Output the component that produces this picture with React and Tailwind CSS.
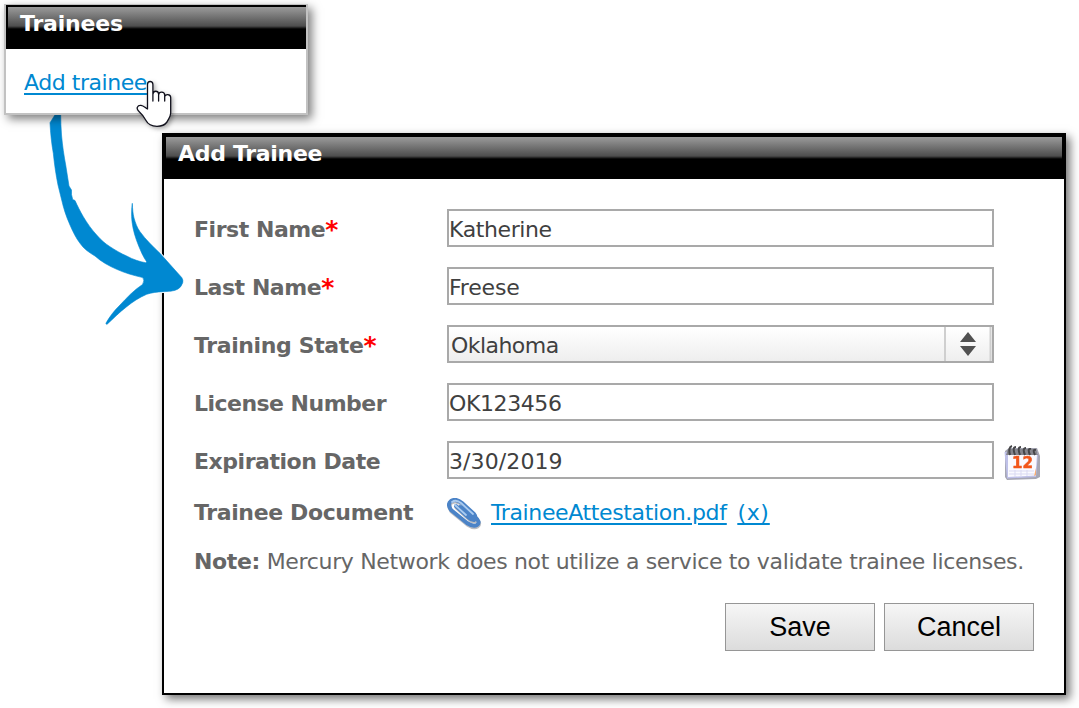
import React, { useState } from 'react';

const STATES = ['Oklahoma', 'Kansas', 'Texas'];

const FIELD =
  'w-[547px] h-[38px] border-2 border-[#a9a9a9] rounded-none bg-white text-[#404040] text-[22px] outline-none';

const ARROW =
  'M50 122.700L55.500 114H60.700C60.700 121 61 128 61.500 135C62.500 146 64 156 65.700 165L69 186L71.500 190V194.500L72.700 199.500L75 200.500C77.500 206 80 211 83.300 216.700C87 223 92 230 96.700 235C101 240 105 243.500 110 246.700C115 250 121 253.500 126.700 256C133 259.500 140 261.800 145.500 262.700Q146.800 262.300 146.500 261.500C143 256.500 141 251.500 138.300 245C135.500 238 133 230 132 221.700C131.300 215 131.500 209 132.300 203.300C132.500 209 133 214 134 218C135.500 223 137 227.500 140 231.700C146 240 153 246.500 160 253.300L181.700 277.500Q183.500 280 182.700 282.800Q181 287.500 178 289C174 291.500 168 291.300 163.300 291.700C157 292 152 292.500 146.700 294.300C139 297.500 132.500 302 126.700 306.700C119 312.500 113 319 106.900 324.400L105.800 323.500C110 316 114 311 120 305C127 297.500 134 290 142.500 284.500Q145 280.500 142.800 277.600C133 275.300 125 273 116.700 269.300C109 266 101 261.500 95 256C89 252.500 84 249 80 243.300C76 238 73 232 70 225C66 216 63.500 208 61.700 200L58 185C56 175 54.500 165 53.300 153.300C51.500 143 50.500 133 50 122.700Z';

function TitleBar({ children, className }) {
  return (
    <div className={`bg-black ${className}`}>
      <div className="h-full bg-[linear-gradient(to_bottom,#9b9b9b_0px,#4e4e4e_19px,#000_22px)] font-bold text-white text-[22px] leading-[34px] whitespace-nowrap">
        {children}
      </div>
    </div>
  );
}

function Row({ label, required, labelClass, children }) {
  return (
    <div className="flex items-center h-[38px] mb-5">
      <label className="flex w-[253px] shrink-0 font-bold whitespace-nowrap pt-[3px]">
        <span className={labelClass}>{label}</span>
        {required && <span className="text-[#ff0000] text-[25px] leading-[26px] tracking-normal">*</span>}
      </label>
      {children}
    </div>
  );
}

function CurvedArrow() {
  return (
    <svg className="absolute left-[40px] top-[105px] z-10" width="160" height="230" viewBox="40 105 160 230">
      <path d={ARROW} fill="#fff" stroke="#fff" strokeWidth="2.5" />
      <path d={ARROW} fill="#0088d1" stroke="#0088d1" strokeWidth="0.6" />
    </svg>
  );
}

function HandCursor() {
  return (
    <svg className="drop-shadow-[2px_2px_2px_rgba(0,0,0,0.3)]" width="44" height="54" viewBox="133 77 44 54">
      <path
        fill="#fff"
        stroke="#10101c"
        strokeWidth="1.3"
        strokeLinejoin="round"
        strokeLinecap="round"
        d="M147.500 109V84.500C147.500 80.500 152.800 80.500 152.900 84.500V101V94.500C153 90 158.300 90.500 158.600 94V101V95C159 91 164.500 91.500 164.700 95V101V97C165 93.500 170.600 94 170.700 97.500V113C170.500 117 169 118 167 122C164.500 125.500 161 126.300 157 126.300C152 126.300 148 124.500 146 120.500C144 117 142.500 114.500 139 111.500C135.500 108.500 137.500 105 141 105.300C143.500 105.500 145.500 108 147.500 109Z"
      />
    </svg>
  );
}

function CalendarIcon() {
  return (
    <svg width="37" height="37" viewBox="0 0 37 37" className="ml-[10px] mt-[5px] shrink-0 blur-[0.6px]">
      <path d="M1 7L5 4H33L36 12V33L32 35L3 36L1 33Z" fill="#a6a7b4" />
      <path d="M0.500 8L3 34.500L32 33L34 9Z" fill="#bfc1e9" />
      <path d="M4 10L33 10L31.500 31.500L4 33Z" fill="#fafaff" />
      <path d="M4 5L32 5L34 11H2Z" fill="#85858c" />
      <path d="M6 11Q4 3 8 2M11 11Q8 3 12 3M16 11Q13 3 17 3M21 11Q18 4 22 4M26 11Q23 4 27 5M31 11Q28 5 32 6" fill="none" stroke="#464649" strokeWidth="2" />
      <path d="M5 27H30M5 30H30M11 26V33M17 26V33M23 26V32" stroke="#d9d9f2" strokeWidth="1" />
      <path d="M30 32L32 24V31Z" fill="#f6ab72" />
      <text x="8" y="24" fontFamily="DejaVu Sans, sans-serif" fontWeight="bold" fontSize="15" textLength="21" lengthAdjust="spacingAndGlyphs" fill="#f2561a" stroke="#f2561a" strokeWidth="0.5">12</text>
    </svg>
  );
}

function PaperClip() {
  return (
    <svg width="36" height="32" viewBox="0 0 36 32" className="shrink-0 mt-[1px] blur-[0.6px]">
      <g fill="none" strokeLinecap="round" strokeLinejoin="round">
        <path d="M13 9L28 19Q34 24 30 27Q26 29 20 25L4 12Q0 6 4 3Q9 0 15 5L27 16Q30 20 27 22Q24 22 21 19L9 8" stroke="#777c85" strokeOpacity="0.5" strokeWidth="4" transform="translate(.5 1.500)" />
        <path d="M13 9L28 19Q34 24 30 27Q26 29 20 25L4 12Q0 6 4 3Q9 0 15 5L27 16Q30 20 27 22Q24 22 21 19L9 8" stroke="#4b83c7" strokeWidth="4" />
        <path d="M5 4Q9 1 14 5L26 16M8 7L19 17" stroke="#a9cbf0" strokeWidth="1.800" />
      </g>
    </svg>
  );
}

function App() {
  const [trainee, setTrainee] = useState({
    firstName: 'Katherine',
    lastName: 'Freese',
    state: 'Oklahoma',
    license: 'OK123456',
    expiration: '3/30/2019',
  });

  const update = (key) => (e) => setTrainee({ ...trainee, [key]: e.target.value });

  return (
    <div className="relative w-[1079px] h-[708px] bg-white overflow-hidden flow-root font-['DejaVu_Sans',sans-serif] text-[22px] leading-[26px] text-[#666]">
      {/* trainees list */}
      <div className="relative z-20 w-[304px] h-[111px] ml-1 mt-1 border-2 border-t-1 border-[#c2c2c2] bg-white shadow-[4px_4px_9px_rgba(0,0,0,0.5)]">
        <TitleBar className="h-[44px] pt-[2px] pl-[2px]">
          <span className="pl-3 tracking-[-0.2px]">Trainees</span>
        </TitleBar>
        <a href="#" className="block w-fit ml-[18px] mt-[21px] text-[#0088d1] tracking-[-0.45px] underline decoration-2 underline-offset-[3px]">
          Add trainee
        </a>
      </div>

      <CurvedArrow />

      {/* add trainee form */}
      <div className="w-[904px] h-[562px] ml-[162px] mt-[18px] border-2 border-black bg-white shadow-[4px_4px_9px_rgba(0,0,0,0.55)]">
        <TitleBar className="h-[44px] pt-[2px] px-[2px]">
          <span className="pl-3 tracking-[-0.3px]">Add Trainee</span>
        </TitleBar>

        <div className="pt-[30px] pl-[30px]">
          <Row label="First Name" required labelClass="tracking-[-0.45px]">
            <input className={`${FIELD} pt-[2px] tracking-[-0.4px]`} value={trainee.firstName} onChange={update('firstName')} />
          </Row>
          <Row label="Last Name" required labelClass="tracking-[-0.45px]">
            <input className={`${FIELD} pt-[2px] tracking-[-0.2px]`} value={trainee.lastName} onChange={update('lastName')} />
          </Row>
          <Row label="Training State" required labelClass="tracking-[-0.38px]">
            <div className="relative">
              <select
                className={`${FIELD} appearance-none block pl-[2px] pt-[3px] tracking-[-0.55px] bg-linear-to-b from-white to-[#eeeeee]`}
                value={trainee.state}
                onChange={update('state')}
              >
                {STATES.map((name) => (
                  <option key={name}>{name}</option>
                ))}
              </select>
              <svg className="absolute right-[2px] top-[2px] pointer-events-none" width="48" height="34" viewBox="0 0 48 34">
                <path d="M1 0V34M46.500 0V34" stroke="#cfcfcf" strokeWidth="2" />
                <path d="M24 5L32 15H16ZM24 29L32 19H16Z" fill="#515151" />
              </svg>
            </div>
          </Row>
          <Row label="License Number" labelClass="tracking-[-0.53px]">
            <input className={`${FIELD} pt-[2px] tracking-[-0.4px]`} value={trainee.license} onChange={update('license')} />
          </Row>
          <Row label="Expiration Date" labelClass="tracking-[-0.47px]">
            <input className={`${FIELD} pt-[2px] tracking-[0.1px]`} value={trainee.expiration} onChange={update('expiration')} />
            <CalendarIcon />
          </Row>

          {/* attached file */}
          <div className="flex items-center h-[32px] mt-[-2px]">
            <span className="w-[253px] font-bold tracking-[-0.37px]">Trainee Document</span>
            <PaperClip />
            <div className="flex gap-[11px] ml-2 text-[#0088d1] underline decoration-2 underline-offset-[3px]">
              <a href="#" className="tracking-[-0.37px]">TraineeAttestation.pdf</a>
              <a href="#" className="tracking-[0.6px]">(x)</a>
            </div>
          </div>

          <p className="mt-[20px] whitespace-nowrap tracking-[-0.34px]">
            <b>Note:</b> Mercury Network does not utilize a service to validate trainee licenses.
          </p>

          <div className="flex justify-end gap-[9px] mt-[28px] mr-[30px] font-['Liberation_Sans',Arial,sans-serif] text-[27px] text-black">
            <button className="w-[150px] h-[48px] border border-[#969696] bg-linear-to-b from-[#f6f6f6] to-[#dcdcdc]">Save</button>
            <button className="w-[150px] h-[48px] border border-[#969696] bg-linear-to-b from-[#f6f6f6] to-[#dcdcdc]">Cancel</button>
          </div>
        </div>
      </div>

      <div className="absolute left-[133px] top-[77px] z-30 pointer-events-none">
        <HandCursor />
      </div>
    </div>
  );
}

export default App;
